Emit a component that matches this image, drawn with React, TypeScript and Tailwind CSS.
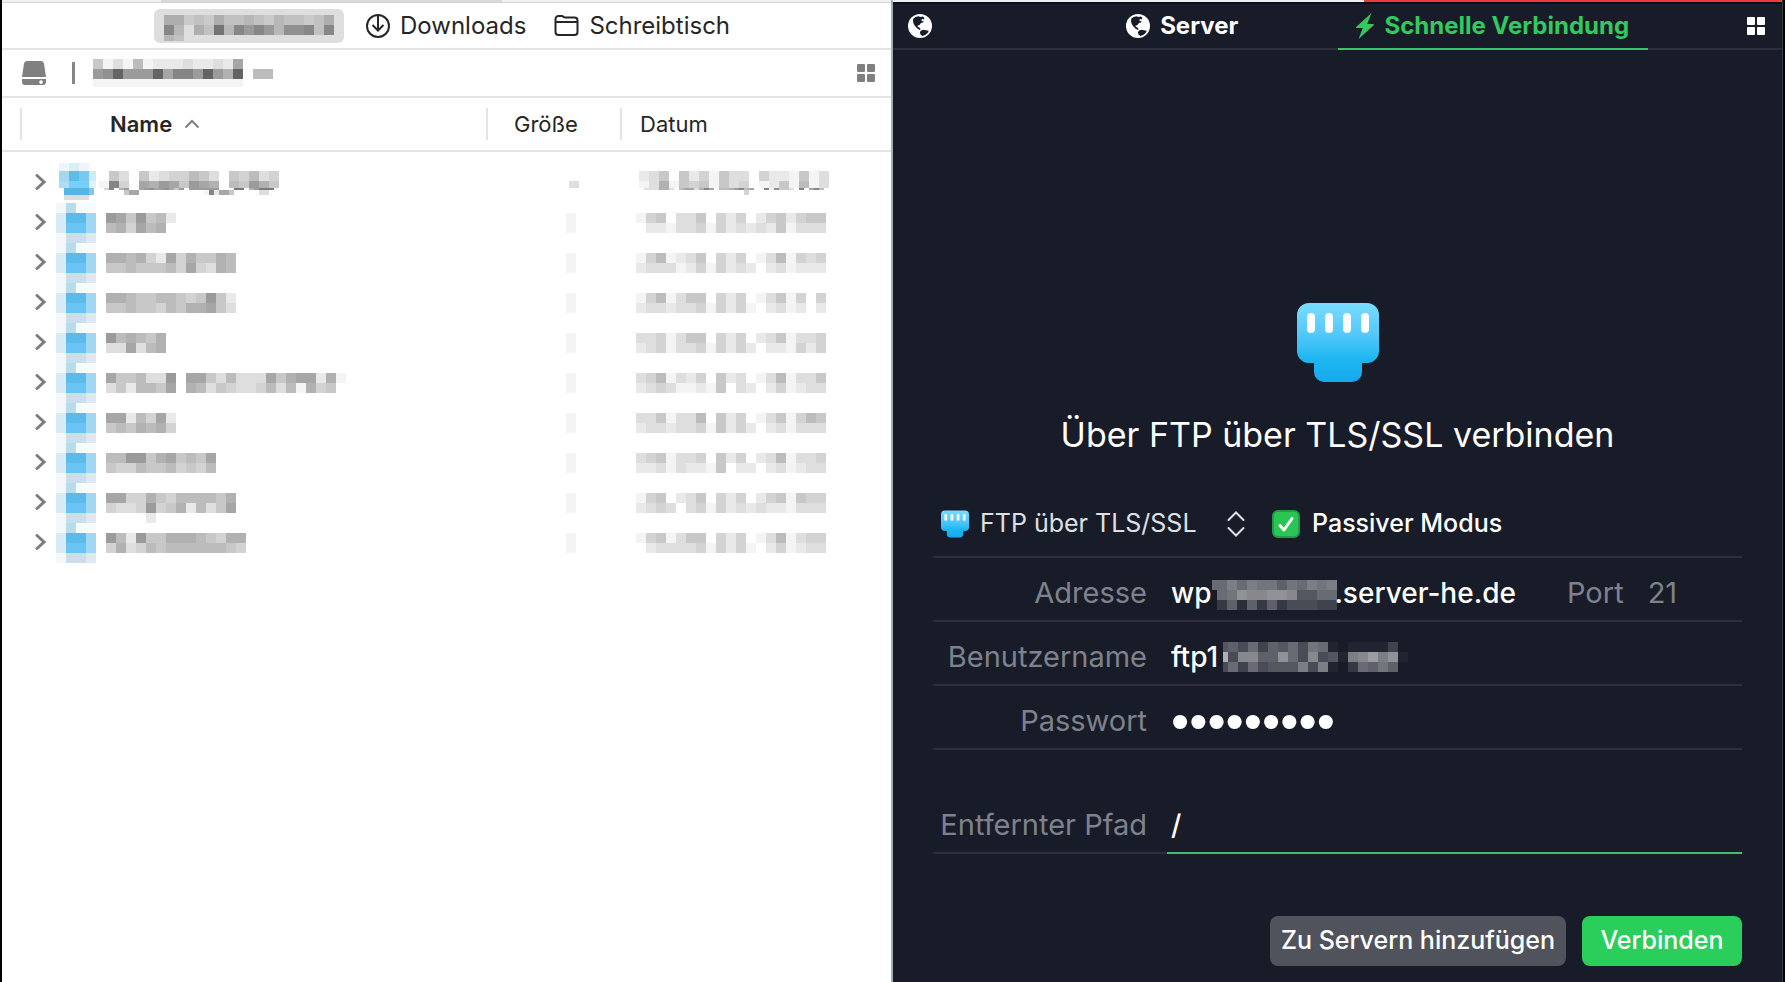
import { useState } from "react";

type Band = { x?: number; y: number; w?: number; h?: number; cells: string };

type FolderRow = { name: Band[]; size: Band[]; date: Band[] };

// One hex digit per block, "." leaves the block empty.
function Mosaic({
  bands,
  width,
  height,
  className = "",
}: {
  bands: Band[];
  width: number;
  height: number;
  className?: string;
}) {
  return (
    <svg
      aria-hidden
      width={width}
      height={height}
      viewBox={`0 0 ${width} ${height}`}
      shapeRendering="crispEdges"
      fill="currentColor"
      className={`block shrink-0 overflow-visible ${className}`}
    >
      {bands.map(({ x = 0, y, w = 10, h = 10, cells }, band) =>
        cells.split("").map((cell, i) =>
          cell === "." ? null : (
            <rect
              key={`${band}-${i}`}
              x={x + i * w}
              y={y}
              width={w}
              height={h}
              fillOpacity={parseInt(cell, 16) / 23}
            />
          ),
        ),
      )}
    </svg>
  );
}

const row = (name: [string, string], date: [string, string], extra: Band[] = []): FolderRow => ({
  name: [{ y: 10, cells: name[0] }, { y: 20, cells: name[1] }, ...extra],
  size: [{ y: 10, h: 20, cells: "1" }],
  date: [
    { y: 10, cells: date[0] },
    { y: 20, cells: date[1] },
  ],
});

const folders: FolderRow[] = [
  {
    name: [
      { x: -7, y: 8, cells: ".53.52344653.54634" },
      { x: -7, y: 18, h: 7, cells: "1b4.87985987.65975" },
      { x: -2, y: 25, w: 5, h: 2, cells: "4b.79..89a89a859.999999...cc.79ccc" },
      { x: 18, y: 27, w: 5, h: 5, cells: "588.............1b2885.....33" },
    ],
    size: [{ x: 3, y: 18, h: 7, cells: "3" }],
    date: [
      { x: 3, y: 8, cells: "235.5241533.4221513" },
      { x: 3, y: 18, h: 7, cells: "13715451534.1251613" },
      { x: 8, y: 25, w: 5, h: 2, cells: "333773.68837b8.6679b68..b1a553.b.8b6" },
      { x: 108, y: 27, w: 5, h: 5, cells: "4" },
    ],
  },
  row(["9859562", "674867"], ["145.335.424.2452455", ".221334142323251333"]),
  row(["7767428475576", "5565556484376"], ["1461235.424.1361434", "233312414232.231222"]),
  row(["7765566545952", "5565546577853"], ["1461355.424.13514.4", "233233414241.2312.2"]),
  row(["967657", "338367"], ["3341355.424.2351334", "234133414242.221424"]),
  row(
    ["8556339.8853633385788271", "3526658.763543346361745"],
    ["3461324.523.1361335", "234311215.32.241233"],
  ),
  row(["8826482", "5657674"], ["3351336.524.1351465", "233233415242.231333"]),
  row(["66995785658", "54465564546"], ["3451334.524.2361334", "223132215.22.231233"]),
  row(
    ["8844754666657", "4334945726358"],
    ["145.235.424.2451544", "2343.34142323221333"],
    [{ x: 40, y: 30, cells: "2" }],
  ),
  row(["96295577765477", "47346566666654"], ["1451355.424.1361344", ".23333414241.241233"]),
];

const addressMask: Band[] = [
  { x: 0, y: 0, w: 5, cells: "8" },
  { x: 5, y: 0, cells: "8a8a99798a9a" },
  { x: 5, y: 10, cells: "89cbbccb6688" },
  { x: 5, y: 20, cells: "372737355544" },
];

const userMask: Band[] = [
  { x: 0, y: 0, w: 5, cells: "6" },
  { x: 0, y: 10, w: 5, cells: "f" },
  { x: 0, y: 20, w: 5, cells: "5" },
  { x: 5, y: 0, cells: "75847685981.11114" },
  { x: 5, y: 10, cells: "5bb77c85b561abdac1" },
  { x: 5, y: 20, cells: "8485666a5a1.38797" },
];

const homeMask: Band[] = [
  { x: 10, y: 6, cells: "55232533432433235" },
  { x: 10, y: 16, cells: "94.53b49797488939" },
  { x: 10, y: 26, h: 6, cells: "43" },
];

const pathMask: Band[] = [
  { y: 0, cells: "513161222322328" },
  { y: 10, cells: "9ae999e8bb9e97e.66" },
  { y: 20, h: 8, cells: "111111111111111" },
];

const folderPixels = [
  ["#f4f8fb", "#b5dcef", "#f6fbfd", "#f6fbfd"],
  ["#d6ebf5", "#5bbbeb", "#5bbbeb", "#a0d7f3"],
  ["#d6ebf5", "#6ac5f5", "#6ac5f5", "#a0d7f3"],
  ["#f4f8fb", "#cadfe9", "#cadfe9", "#dfeaf0"],
];

function FolderPixels({ first }: { first: boolean }) {
  if (first) {
    return (
      <svg aria-hidden width="40" height="40" viewBox="0 0 40 40" shapeRendering="crispEdges" className="shrink-0">
        <path d="M3 0h10v8h-10z" fill="#eaf6fa" />
        <path d="M13 0h10v8h-10z" fill="#d9edf4" />
        <path d="M23 0h10v8h-10z" fill="#eaf6fa" />
        <path d="M3 8h10v10h-10z" fill="#a3d6ef" />
        <path d="M13 8h10v10h-10z" fill="#5dbcec" />
        <path d="M23 8h10v10h-10z" fill="#78c9f1" />
        <path d="M33 8h7v10h-7z" fill="#cdeaf8" />
        <path d="M3 18h10v7h-10z" fill="#b0dcf2" />
        <path d="M13 18h20v7h-20z" fill="#76cffb" />
        <path d="M33 18h7v7h-7z" fill="#e0f2fa" />
        <path d="M8 25h25v7h-25z" fill="#55b5e4" />
        <path d="M33 25h5v7h-5z" fill="#8bc4e0" />
        <path d="M8 32h25v5h-25z" fill="#dcdcde" />
      </svg>
    );
  }

  return (
    <svg aria-hidden width="40" height="40" viewBox="0 0 40 40" shapeRendering="crispEdges" className="shrink-0">
      {folderPixels.map((line, y) =>
        line.map((fill, x) => <rect key={`${x}-${y}`} x={x * 10} y={y * 10} width="10" height="10" fill={fill} />),
      )}
    </svg>
  );
}

function GlobeIcon() {
  return (
    <svg aria-hidden width="24" height="24" viewBox="0 0 24 24" className="shrink-0">
      <circle cx="12" cy="12" r="12" fill="#fff" />
      <path
        fill="#181c28"
        d="M5.200 4.800 7.500 3l3.200-.8 1.500.9 2.600-.6 1.600 1.300-.5 1.700-1.500-.5-1.200.9.8 1.300 1.600-.4-.6 1.700-2 .5-1.500 2-2 .7.3 1.300 1.600.4 1.200 1.600-.6.900-2.400-1.200-2.200-2.200-1.700-2.600-.7-3z"
      />
      <path fill="#181c28" d="M11.800 18.200l1.300-1.700 2.500-.7 2.200.5 3 .5-1.200 2.200-2.400 2.100-2.800.9-1.700-1.200z" />
    </svg>
  );
}

function GridIcon() {
  return (
    <svg aria-hidden width="18" height="18" viewBox="0 0 18 18" fill="currentColor">
      <rect width="8" height="8" rx="1" />
      <rect x="10" width="8" height="8" rx="1" />
      <rect y="10" width="8" height="8" rx="1" />
      <rect x="10" y="10" width="8" height="8" rx="1" />
    </svg>
  );
}

function PlugIcon({ id, className }: { id: string; className: string }) {
  return (
    <svg aria-hidden viewBox="0 0 82 79" className={`shrink-0 ${className}`}>
      <defs>
        <linearGradient id={id} x1="0" y1="0" x2="0" y2="1">
          <stop offset="0" stopColor="#7adcfe" />
          <stop offset="0.4" stopColor="#52c8fb" />
          <stop offset="0.72" stopColor="#1cb6f1" />
          <stop offset="1" stopColor="#16a9ec" />
        </linearGradient>
      </defs>
      <path
        fill={`url(#${id})`}
        d="M12 0h58a12 12 0 0 1 12 12v36a12 12 0 0 1-12 12h-5v9a10 10 0 0 1-10 10H27a10 10 0 0 1-10-10v-9h-5A12 12 0 0 1 0 48V12A12 12 0 0 1 12 0z"
      />
      <g fill="#fff">
        <rect x="10" y="10" width="8" height="20" rx="4" />
        <rect x="28" y="10" width="8" height="20" rx="4" />
        <rect x="46" y="10" width="8" height="20" rx="4" />
        <rect x="64" y="10" width="8" height="20" rx="4" />
      </g>
    </svg>
  );
}

function LocalPane() {
  return (
    <section className="min-w-0 flex-1 border-r-2 border-[#a9abb2] bg-white text-[#262626]">
      <div className="h-[3px] border-b border-[#d4d4d4] bg-[#f1f1f1] pl-[159px]">
        <div className="h-[2px] w-[341px] bg-[#d8d8d8]" />
      </div>

      <nav className="flex h-[47px] items-center border-b-2 border-[#e4e4e4] pl-[152px] text-[24px]">
        <button type="button" aria-label="Benutzerordner" className="h-[34px] w-[190px] rounded-md bg-[#dedede] text-black">
          <Mosaic bands={homeMask} width={190} height={34} />
        </button>
        <button type="button" className="ml-[22px] flex items-center gap-[10px]">
          <svg aria-hidden width="24" height="24" viewBox="0 0 24 24" fill="none" stroke="currentColor" strokeWidth="2">
            <circle cx="12" cy="12" r="11" />
            <path d="M12 2v14M6.500 11 12 16.500l5.500-5.500" />
          </svg>
          Downloads
        </button>
        <button type="button" className="ml-7 flex items-center gap-[10px]">
          <svg aria-hidden width="25" height="24" viewBox="0 0 25 24" fill="none" stroke="currentColor" strokeWidth="2">
            <path d="M1.500 18V5a3 3 0 0 1 3-3h3.200q1 0 1.800.8t1.800.8h9.200a3 3 0 0 1 3 3V18a3 3 0 0 1-3 3h-16a3 3 0 0 1-3-3zM1.500 8h22" />
          </svg>
          Schreibtisch
        </button>
      </nav>

      <div className="flex h-12 items-center border-b-2 border-[#e4e4e4] pl-5 pr-4 text-[#808080]">
        <svg aria-hidden width="24" height="24" viewBox="0 0 24 24" fill="currentColor">
          <path d="M5 0h14a3 3 0 0 1 3 2.500L24 16H0L2 2.500A3 3 0 0 1 5 0z" />
          <path fillRule="evenodd" d="M0 18h24v3a3 3 0 0 1-3 3H3a3 3 0 0 1-3-3zM19 19.300a1.800 1.800 0 1 0 .01 0z" />
        </svg>
        <span className="ml-[26px] h-[22px] w-[3px] bg-[#868686]" />
        <Mosaic bands={pathMask} width={180} height={28} className="ml-[18px] text-black" />
        <button type="button" aria-label="Ansicht" className="ml-auto">
          <GridIcon />
        </button>
      </div>

      <table className="w-full table-fixed border-collapse text-[22px]">
        <colgroup>
          <col />
          <col className="w-[134px]" />
          <col className="w-[271px]" />
        </colgroup>
        <thead>
          <tr className="h-[53px] border-b-2 border-[#e4e4e4] text-left">
            <th scope="col" className="p-0 pl-[18px]">
              <div className="flex h-8 items-center gap-3 border-l-2 border-[#e4e4e4] pl-[88px] font-semibold">
                Name
                <svg aria-hidden width="16" height="10" viewBox="0 0 16 10" fill="none" stroke="#808080" strokeWidth="2">
                  <path d="M1.500 8.500 8 2l6.500 6.500" />
                </svg>
              </div>
            </th>
            <th scope="col" className="p-0">
              <div className="flex h-8 items-center border-l-2 border-[#e4e4e4] pl-[26px] font-normal">Größe</div>
            </th>
            <th scope="col" className="p-0">
              <div className="flex h-8 items-center border-l-2 border-[#e4e4e4] pl-[18px] font-normal">Datum</div>
            </th>
          </tr>
        </thead>
        <tbody className="text-black before:block before:h-[11px]">
          {folders.map((folder, i) => (
            <tr key={i} className="h-10">
              <td className="p-0">
                <div className="flex items-center pl-[33px]">
                  <svg
                    aria-hidden
                    width="11"
                    height="18"
                    viewBox="0 0 11 18"
                    fill="none"
                    stroke="#7d7d7d"
                    strokeWidth="3"
                    strokeLinecap="round"
                    className="mr-[10px] shrink-0"
                  >
                    <path d="M2 1.500 9 8l-7 6.500" />
                  </svg>
                  <FolderPixels first={i === 0} />
                  <Mosaic bands={folder.name} width={240} height={40} className="ml-[10px]" />
                </div>
              </td>
              <td className="p-0 pl-20">
                <Mosaic bands={folder.size} width={10} height={40} />
              </td>
              <td className="p-0 pl-4">
                <Mosaic bands={folder.date} width={190} height={40} />
              </td>
            </tr>
          ))}
        </tbody>
      </table>
    </section>
  );
}

function ConnectPane() {
  const [passive, setPassive] = useState(true);

  return (
    <section className="flex min-w-0 flex-1 flex-col border-r border-[#3a3c47] bg-[#181c28] text-white">
      <div className="flex h-[2px]">
        <div className="w-[53%] bg-[#eceef4]" />
        <div className="flex-1 bg-[#ee3a3c]" />
      </div>

      <nav className="flex h-12 border-t-2 border-[#0c0e16] text-[24px] font-bold">
        <div className="flex w-[134px] items-center border-b-2 border-[#2c2e3b] pl-[15px]">
          <button type="button" aria-label="Verlauf">
            <GlobeIcon />
          </button>
        </div>
        <button type="button" className="flex flex-1 items-center justify-center gap-[10px] border-b-2 border-[#2c2e3b]">
          <GlobeIcon />
          Server
        </button>
        <button
          type="button"
          className="flex flex-1 items-center justify-center gap-[10px] border-b-2 border-[#38c566] text-[#32c95f]"
        >
          <svg aria-hidden width="18" height="26" viewBox="0 0 18 26" fill="currentColor" className="shrink-0">
            <path d="M15.500 0 .4 13.800c-.6.600-.4 1.200.4 1.200h6L2.600 26 17.600 12.200c.6-.6.400-1.200-.4-1.200h-6z" />
          </svg>
          Schnelle Verbindung
        </button>
        <div className="flex w-[134px] items-center justify-end border-b-2 border-[#2c2e3b] pr-[17px]">
          <button type="button" aria-label="Ansicht">
            <GridIcon />
          </button>
        </div>
      </nav>

      <form className="flex flex-1 flex-col justify-end px-10 pb-4 text-[28px]" onSubmit={(e) => e.preventDefault()}>
        <PlugIcon id="plug-large" className="mx-auto h-[79px] w-[82px]" />
        <h1 className="mt-7 text-center text-[34px] leading-[50px]">Über FTP über TLS/SSL verbinden</h1>

        <div className="mt-8 flex h-[66px] items-center border-b-2 border-[#2c2e3b] pl-2 text-[25px]">
          <PlugIcon id="plug-small" className="h-[28px] w-[28px]" />
          <div className="relative ml-[11px] w-[265px]">
            <select aria-label="Protokoll" className="w-full appearance-none bg-transparent text-[#dfe0e6] outline-none">
              <option>FTP über TLS/SSL</option>
            </select>
            <svg
              aria-hidden
              width="18"
              height="26"
              viewBox="0 0 18 26"
              fill="none"
              stroke="#dfe0e6"
              strokeWidth="2"
              strokeLinecap="round"
              className="pointer-events-none absolute right-0 top-1/2 -translate-y-1/2"
            >
              <path d="M1.500 9 9 1.500 16.500 9M1.500 17 9 24.500 16.500 17" />
            </svg>
          </div>
          <label className="ml-[27px] flex items-center gap-3 font-medium">
            <span className="relative block h-7 w-7">
              <input
                type="checkbox"
                checked={passive}
                onChange={(e) => setPassive(e.target.checked)}
                className="block h-7 w-7 appearance-none rounded-md border-2 border-[#229c48] bg-[#29c656]"
              />
              {passive && (
                <svg
                  aria-hidden
                  viewBox="0 0 28 28"
                  fill="none"
                  stroke="#fff"
                  strokeWidth="3"
                  strokeLinecap="round"
                  strokeLinejoin="round"
                  className="pointer-events-none absolute inset-0"
                >
                  <path d="M8 15.500 12 20 20 8.500" />
                </svg>
              )}
            </span>
            Passiver Modus
          </label>
        </div>

        <div className="flex h-16 items-center border-b-2 border-[#2c2e3b] pt-2">
          <label htmlFor="address" className="w-[234px] pr-5 text-right text-[29px] text-[#7f828c]">
            Adresse
          </label>
          <div className="relative w-[370px]">
            <input
              id="address"
              defaultValue={"wp\u2007\u2007\u2007\u2007\u2007\u2007\u2002.server-he.de"}
              className="block w-full bg-transparent pl-1 font-medium outline-none"
            />
            <Mosaic bands={addressMask} width={125} height={30} className="pointer-events-none absolute left-[45px] top-[8px]" />
          </div>
          <label htmlFor="port" className="ml-[30px] text-[29px] text-[#7f828c]">
            Port
          </label>
          <input id="port" defaultValue="21" className="ml-6 w-16 bg-transparent text-[29px] text-[#7f828c] outline-none" />
        </div>

        <div className="flex h-16 items-center border-b-2 border-[#2c2e3b] pt-2">
          <label htmlFor="user" className="w-[234px] pr-5 text-right text-[29px] text-[#7f828c]">
            Benutzername
          </label>
          <div className="relative flex-1">
            <input id="user" defaultValue="ftp1" className="block w-full bg-transparent pl-1 font-medium outline-none" />
            <Mosaic bands={userMask} width={185} height={30} className="pointer-events-none absolute left-[56px] top-[6px]" />
          </div>
        </div>

        <div className="flex h-16 items-center border-b-2 border-[#2c2e3b] pt-2">
          <label htmlFor="password" className="w-[234px] pr-5 text-right text-[29px] text-[#7f828c]">
            Passwort
          </label>
          <input
            id="password"
            type="password"
            defaultValue="geheim123"
            className="h-12 min-w-0 flex-1 bg-transparent pl-1 font-['Liberation_Sans',sans-serif] text-[52px] outline-none"
          />
        </div>

        <div className="mt-12 flex h-14 items-stretch">
          <label
            htmlFor="path"
            className="flex w-[234px] items-center justify-end border-b-2 border-[#2c2e3b] pr-5 text-[29px] text-[#7f828c]"
          >
            Entfernter Pfad
          </label>
          <input
            id="path"
            defaultValue="/"
            className="min-w-0 flex-1 border-b-2 border-[#3fbf6b] bg-transparent pl-1 font-medium outline-none"
          />
        </div>

        <div className="mt-[62px] flex justify-end gap-4 text-[25px] font-medium">
          <button type="button" className="h-[50px] w-[296px] rounded-lg bg-[#50535b]">
            Zu Servern hinzufügen
          </button>
          <button type="submit" className="h-[50px] w-40 rounded-lg bg-[#2acf5b]">
            Verbinden
          </button>
        </div>
      </form>
    </section>
  );
}

export default function App() {
  return (
    <main className="flex min-h-screen border-x-2 border-black bg-black font-['Inter',sans-serif]">
      <LocalPane />
      <ConnectPane />
    </main>
  );
}
